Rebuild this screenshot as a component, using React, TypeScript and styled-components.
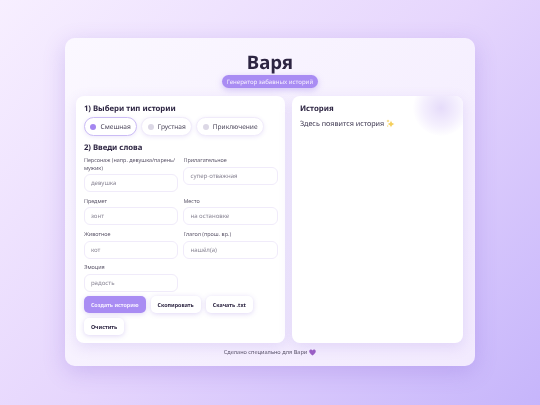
import styled, { createGlobalStyle } from "styled-components";

const GlobalStyle = createGlobalStyle`
  html, body {
    margin: 0;
    padding: 0;
    height: 405px;
    overflow: hidden;
  }
  body {
    background: linear-gradient(135deg, #f7efff 0%, #e6d6fd 50%, #c6b5fb 100%);
    font-family: "Noto Sans", "Open Sans", sans-serif;
    color: #2b2440;
    text-rendering: geometricPrecision;
  }
`;

const Page = styled.main`
  width: 540px;
  height: 405px;
  padding: 38.3px 65.4px 0;
  box-sizing: border-box;
`;

const Card = styled.div`
  height: 327.7px;
  box-sizing: border-box;
  padding: 12.4px 11px 0;
  border-radius: 10px;
  background: linear-gradient(135deg, #fbf8ff 0%, #f2eafe 100%);
  box-shadow: 0 6px 22px rgba(120, 85, 210, 0.24);
  display: flex;
  flex-direction: column;
  align-items: center;
  filter: blur(0.35px);
`;

const Title = styled.h1`
  margin: 0;
  font-size: 18.6px;
  line-height: 24px;
  font-weight: 700;
  color: #2d2542;
`;

const Badge = styled.div`
  height: 13px;
  padding: 0 4.7px;
  border-radius: 7px;
  background: #a98cf3;
  color: #f6f0ff;
  font-size: 6.1px;
  line-height: 13px;
  box-shadow: 0 2px 6px rgba(140, 105, 235, 0.35);
`;

const Panels = styled.div`
  align-self: stretch;
  margin-top: 8.3px;
  height: 246.7px;
  display: grid;
  grid-template-columns: 209px 171px;
  gap: 7px;
`;

const Panel = styled.section`
  position: relative;
  overflow: hidden;
  box-sizing: border-box;
  padding: 7px 7.5px 0;
  background: #fff;
  border-radius: 8px;
  box-shadow: 0 4px 14px rgba(130, 95, 220, 0.16);
`;

const Glow = styled.div`
  position: absolute;
  top: -16px;
  right: -6px;
  width: 56px;
  height: 56px;
  border-radius: 50%;
  background: radial-gradient(circle, #e6dcfa 0%, rgba(240, 233, 253, 0.7) 45%, rgba(255, 255, 255, 0) 72%);
`;

const SectionTitle = styled.h2`
  margin: 0;
  font-size: 7.75px;
  line-height: 12px;
  font-weight: 700;
  color: #2d2542;
`;

const Types = styled.div`
  display: flex;
  gap: 3.8px;
  margin: 2.3px 0 5.7px;
`;

const TypeChip = styled.div<{ $active?: boolean }>`
  height: 18.7px;
  box-sizing: border-box;
  padding: 0 5.6px;
  display: flex;
  align-items: center;
  gap: 4px;
  border-radius: 10px;
  background: #fff;
  border: 0.7px solid ${(p) => (p.$active ? "#cbbcf5" : "#f0ebfa")};
  box-shadow: 0 1px 4px rgba(130, 95, 220, 0.14);
  font-size: 6.6px;
  color: #4a4459;
`;

const Dot = styled.span<{ $active?: boolean }>`
  width: 6px;
  height: 6px;
  border-radius: 50%;
  background: ${(p) => (p.$active ? "#a486f0" : "#dcd8e6")};
`;

const Fields = styled.div`
  display: grid;
  grid-template-columns: 94.5px 94.5px;
  gap: 5.7px 5px;
  margin-top: 3.3px;
`;

const Field = styled.label`
  display: flex;
  flex-direction: column;
`;

const FieldLabel = styled.span`
  font-size: 5.45px;
  line-height: 7.6px;
  color: #5a5468;
  margin-bottom: 2px;
`;

const Input = styled.div`
  height: 18px;
  box-sizing: border-box;
  padding: 0 6px;
  border: 0.7px solid #f0ebfa;
  border-radius: 6px;
  background: #fff;
  font-size: 6.1px;
  line-height: 16.6px;
  color: #8b8796;
`;

const Actions = styled.div`
  display: flex;
  flex-wrap: wrap;
  gap: 5px;
  margin-top: 4.4px;
`;

const Button = styled.button<{ $primary?: boolean }>`
  height: 17px;
  padding: 0 7px;
  border: 0;
  border-radius: 5px;
  font-family: inherit;
  font-size: 5.4px;
  font-weight: 700;
  text-rendering: geometricPrecision;
  background: ${(p) => (p.$primary ? "#a98cf3" : "#fff")};
  color: ${(p) => (p.$primary ? "#f6f0ff" : "#2d2542")};
  box-shadow: 0 1px 5px rgba(130, 95, 220, 0.25);
`;

const StoryText = styled.p`
  margin: 2.7px 0 0;
  font-size: 7.2px;
  line-height: 12px;
  color: #3d3750;
  display: flex;
  align-items: center;
  gap: 2px;
`;

const Footer = styled.footer`
  margin-top: 5px;
  font-size: 5.6px;
  line-height: 9px;
  color: #5a5468;
  display: flex;
  align-items: center;
  gap: 2px;
`;

const fields = [
  { label: "Персонаж (напр. девушка/парень/мужик)", value: "девушка" },
  { label: "Прилагательное", value: "супер-отважная" },
  { label: "Предмет", value: "зонт" },
  { label: "Место", value: "на остановке" },
  { label: "Животное", value: "кот" },
  { label: "Глагол (прош. вр.)", value: "нашёл(а)" },
  { label: "Эмоция", value: "радость" },
];

function Sparkles() {
  return (
    <svg width="9" height="9" viewBox="0 0 18 18">
      <path d="M10 3 Q11 9 17 10 Q11 11 10 17 Q9 11 3 10 Q9 9 10 3Z" fill="#f5cf5b" />
      <path d="M4 1 Q4.5 3.5 7 4 Q4.5 4.5 4 7 Q3.5 4.5 1 4 Q3.5 3.5 4 1Z" fill="#f5cf5b" />
      <path d="M3.5 12 Q3.8 13.7 5.5 14 Q3.8 14.3 3.5 16 Q3.2 14.3 1.5 14 Q3.2 13.7 3.5 12Z" fill="#f5cf5b" />
    </svg>
  );
}

function Heart() {
  return (
    <svg width="7" height="7" viewBox="0 0 14 14">
      <path d="M7 13 C2 9 0.5 7 0.5 4.5 C0.5 2.3 2.2 1 4 1 C5.3 1 6.4 1.7 7 2.8 C7.6 1.7 8.7 1 10 1 C11.8 1 13.5 2.3 13.5 4.5 C13.5 7 12 9 7 13Z" fill="#9b5fc4" />
    </svg>
  );
}

export default function App() {
  return (
    <>
      <GlobalStyle />
      <Page>
        <Card>
          <Title>Варя</Title>
          <Badge>Генератор забавных историй</Badge>
          <Panels>
            <Panel>
              <SectionTitle>1) Выбери тип истории</SectionTitle>
              <Types>
                <TypeChip $active>
                  <Dot $active />
                  Смешная
                </TypeChip>
                <TypeChip>
                  <Dot />
                  Грустная
                </TypeChip>
                <TypeChip>
                  <Dot />
                  Приключение
                </TypeChip>
              </Types>
              <SectionTitle>2) Введи слова</SectionTitle>
              <Fields>
                {fields.map((f) => (
                  <Field key={f.label}>
                    <FieldLabel>{f.label}</FieldLabel>
                    <Input>{f.value}</Input>
                  </Field>
                ))}
              </Fields>
              <Actions>
                <Button $primary>Создать историю</Button>
                <Button>Скопировать</Button>
                <Button>Скачать .txt</Button>
                <Button>Очистить</Button>
              </Actions>
            </Panel>
            <Panel>
              <Glow />
              <SectionTitle>История</SectionTitle>
              <StoryText>
                Здесь появится история <Sparkles />
              </StoryText>
            </Panel>
          </Panels>
          <Footer>
            Сделано специально для Вари <Heart />
          </Footer>
        </Card>
      </Page>
    </>
  );
}
